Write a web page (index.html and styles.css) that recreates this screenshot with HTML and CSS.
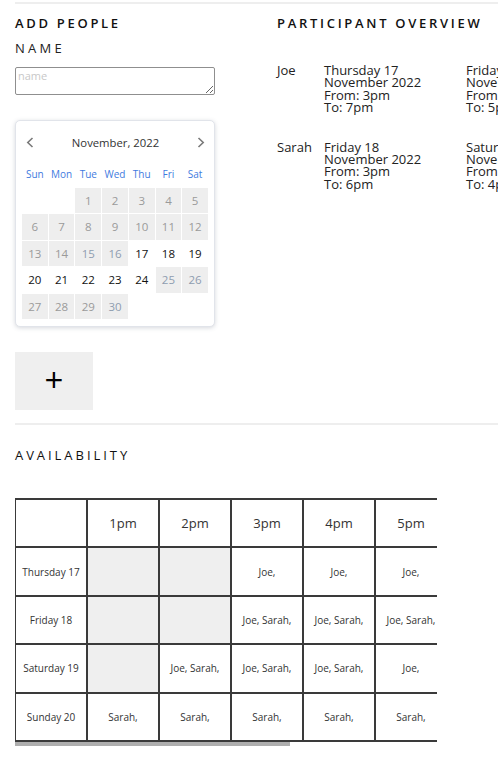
FILE: index.html
```html
<!DOCTYPE html>
<html lang="en">
<head>
<meta charset="utf-8">
<title>Scheduler</title>
<link rel="stylesheet" href="styles.css">
</head>
<body>
<div class="page">
  <section class="top">
    <div class="add">
      <h2 class="heading">ADD PEOPLE</h2>
      <div class="label">NAME</div>
      <textarea class="name-input" placeholder="name"></textarea>
      <div class="calendar">
        <div class="cal-head">
          <svg class="chev" width="8" height="11" viewBox="0 0 8 11"><path d="M6.5 1 L1.8 5.5 L6.5 10" fill="none" stroke="#7a7a7a" stroke-width="1.6"/></svg>
          <span class="cal-title">November, 2022</span>
          <svg class="chev" width="8" height="11" viewBox="0 0 8 11"><path d="M1.5 1 L6.2 5.5 L1.5 10" fill="none" stroke="#7a7a7a" stroke-width="1.6"/></svg>
        </div>
        <div class="cal-grid">
          <div class="wd">Sun</div><div class="wd">Mon</div><div class="wd">Tue</div><div class="wd">Wed</div><div class="wd">Thu</div><div class="wd">Fri</div><div class="wd">Sat</div>
          <div class="blank"></div><div class="blank"></div>
          <div class="d off">1</div><div class="d off">2</div><div class="d off">3</div><div class="d off">4</div><div class="d off">5</div>
          <div class="d off">6</div><div class="d off">7</div><div class="d off">8</div><div class="d off">9</div><div class="d off">10</div><div class="d off">11</div><div class="d off">12</div>
          <div class="d off">13</div><div class="d off">14</div><div class="d off tint">15</div><div class="d off tint">16</div><div class="d">17</div><div class="d">18</div><div class="d">19</div>
          <div class="d">20</div><div class="d">21</div><div class="d">22</div><div class="d">23</div><div class="d">24</div><div class="d off tint">25</div><div class="d off tint">26</div>
          <div class="d off">27</div><div class="d off">28</div><div class="d off">29</div><div class="d off tint">30</div>
        </div>
      </div>
      <button class="add-btn" type="button">+</button>
    </div>
    <div class="overview">
      <h2 class="heading">PARTICIPANT OVERVIEW</h2>
      <div class="person">
        <div class="pname">Joe</div>
        <div class="slot">Thursday 17<br>November 2022<br>From: 3pm<br>To: 7pm</div>
        <div class="slot">Friday 18<br>November 2022<br>From: 3pm<br>To: 5pm</div>
      </div>
      <div class="person">
        <div class="pname">Sarah</div>
        <div class="slot">Friday 18<br>November 2022<br>From: 3pm<br>To: 6pm</div>
        <div class="slot">Saturday 19<br>November 2022<br>From: 2pm<br>To: 4pm</div>
      </div>
    </div>
  </section>
  <section class="availability">
    <h2 class="heading thin">AVAILABILITY</h2>
    <div class="table-wrap">
      <table class="avail">
        <colgroup><col><col><col><col><col><col><col><col><col></colgroup>
        <thead>
          <tr><th></th><th>1pm</th><th>2pm</th><th>3pm</th><th>4pm</th><th>5pm</th><th>6pm</th><th>7pm</th><th>8pm</th></tr>
        </thead>
        <tbody>
          <tr><td class="day">Thursday 17</td><td class="empty"></td><td class="empty"></td><td>Joe,</td><td>Joe,</td><td>Joe,</td><td>Joe,</td><td>Joe,</td><td class="empty"></td></tr>
          <tr><td class="day">Friday 18</td><td class="empty"></td><td class="empty"></td><td>Joe, Sarah,</td><td>Joe, Sarah,</td><td>Joe, Sarah,</td><td>Sarah,</td><td class="empty"></td><td class="empty"></td></tr>
          <tr><td class="day">Saturday 19</td><td class="empty"></td><td>Joe, Sarah,</td><td>Joe, Sarah,</td><td>Joe, Sarah,</td><td>Joe,</td><td class="empty"></td><td class="empty"></td><td class="empty"></td></tr>
          <tr><td class="day">Sunday 20</td><td>Sarah,</td><td>Sarah,</td><td>Sarah,</td><td>Sarah,</td><td>Sarah,</td><td>Sarah,</td><td class="empty"></td><td class="empty"></td></tr>
        </tbody>
      </table>
    </div>
    <div class="scroll-thumb"></div>
  </section>
</div>
</body>
</html>
```
FILE: styles.css
```css
html, body {
  margin: 0;
  padding: 0;
  background: #fff;
}
body {
  overflow: hidden;
  font-family: "Open Sans", "Noto Sans", sans-serif;
  color: #222;
}
.page {
  padding: 2px 0 0 15px;
}
.top {
  display: flex;
  flex-wrap: nowrap;
  border-top: 2px solid #eeeeee;
  padding-top: 10px;
}
.add {
  flex: none;
  width: 262px;
  display: flex;
  flex-direction: column;
  align-items: flex-start;
}
.heading {
  margin: 0;
  font-size: 13px;
  line-height: 18px;
  font-weight: 600;
  letter-spacing: 2.7px;
  color: #111;
}
.heading.thin {
  font-weight: 500;
  letter-spacing: 2.95px;
}
.label {
  margin-top: 6.5px;
  font-size: 13px;
  line-height: 18px;
  letter-spacing: 3.3px;
  color: #222;
}
.name-input {
  margin: 10.5px 0 0;
  box-sizing: border-box;
  width: 200px;
  height: 28px;
  border: 1px solid #8f8f8f;
  border-radius: 2px;
  padding: 1px 2px;
  font-family: "Open Sans", sans-serif;
  font-size: 11px;
  line-height: 14px;
}
.name-input::placeholder {
  color: #c8c8c8;
}
.calendar {
  margin-top: 25px;
  box-sizing: border-box;
  width: 200px;
  border: 1px solid #e1e4ea;
  border-radius: 5px;
  box-shadow: 0 1px 4px rgba(90, 100, 120, 0.25);
  padding: 6px 6px 7px;
  background: #fff;
}
.cal-head {
  height: 30px;
  display: flex;
  align-items: center;
  justify-content: space-between;
  padding: 0 3px 0 4px;
}
.chev {
  display: block;
}
.cal-title {
  font-size: 11.3px;
  color: #333;
}
.cal-grid {
  margin-top: 4px;
  display: grid;
  grid-template-columns: repeat(7, 1fr);
  grid-auto-rows: 25.5px;
  gap: 1px;
}
.wd {
  display: flex;
  align-items: center;
  justify-content: center;
  font-size: 10px;
  color: #3f7be0;
}
.d {
  display: flex;
  align-items: center;
  justify-content: center;
  font-size: 11.5px;
  color: #111;
}
.d.off {
  background: #eeeeee;
  color: #9a9a9a;
}
.d.off.tint {
  color: #8e9db0;
}
.add-btn {
  margin-top: 25px;
  width: 78px;
  height: 58px;
  border: none;
  background: #efefef;
  font-family: "Open Sans", sans-serif;
  font-size: 33px;
  line-height: 1;
  color: #000;
  padding: 0 0 3px;
}
.overview {
  flex: none;
}
.person {
  display: flex;
  font-size: 13px;
  line-height: 12.4px;
  color: #222;
  margin-top: 27px;
}
.heading + .person {
  margin-top: 32px;
}
.pname {
  width: 47px;
  flex: none;
}
.slot {
  width: 142px;
  flex: none;
}
.availability {
  margin-top: 13px;
  border-top: 2px solid #eeeeee;
  padding-top: 21px;
}
.table-wrap {
  margin-top: 34px;
  width: 422px;
  overflow-x: auto;
  scrollbar-width: none;
}
.table-wrap::-webkit-scrollbar {
  display: none;
}
.scroll-thumb {
  width: 275px;
  height: 4px;
  background: #aeaeae;
}
.avail {
  border-collapse: collapse;
  table-layout: fixed;
  width: 648px;
  margin-left: -1px;
}
.avail col {
  width: 72px;
}
.avail th,
.avail td {
  border: 2px solid #3a3a3a;
  height: 46.4px;
  padding: 0;
  text-align: center;
  vertical-align: middle;
  color: #333;
  white-space: nowrap;
}
.avail th {
  font-size: 13px;
  font-weight: 400;
}
.avail td {
  font-size: 10px;
}
.avail td.empty {
  background: #efefef;
}
```
